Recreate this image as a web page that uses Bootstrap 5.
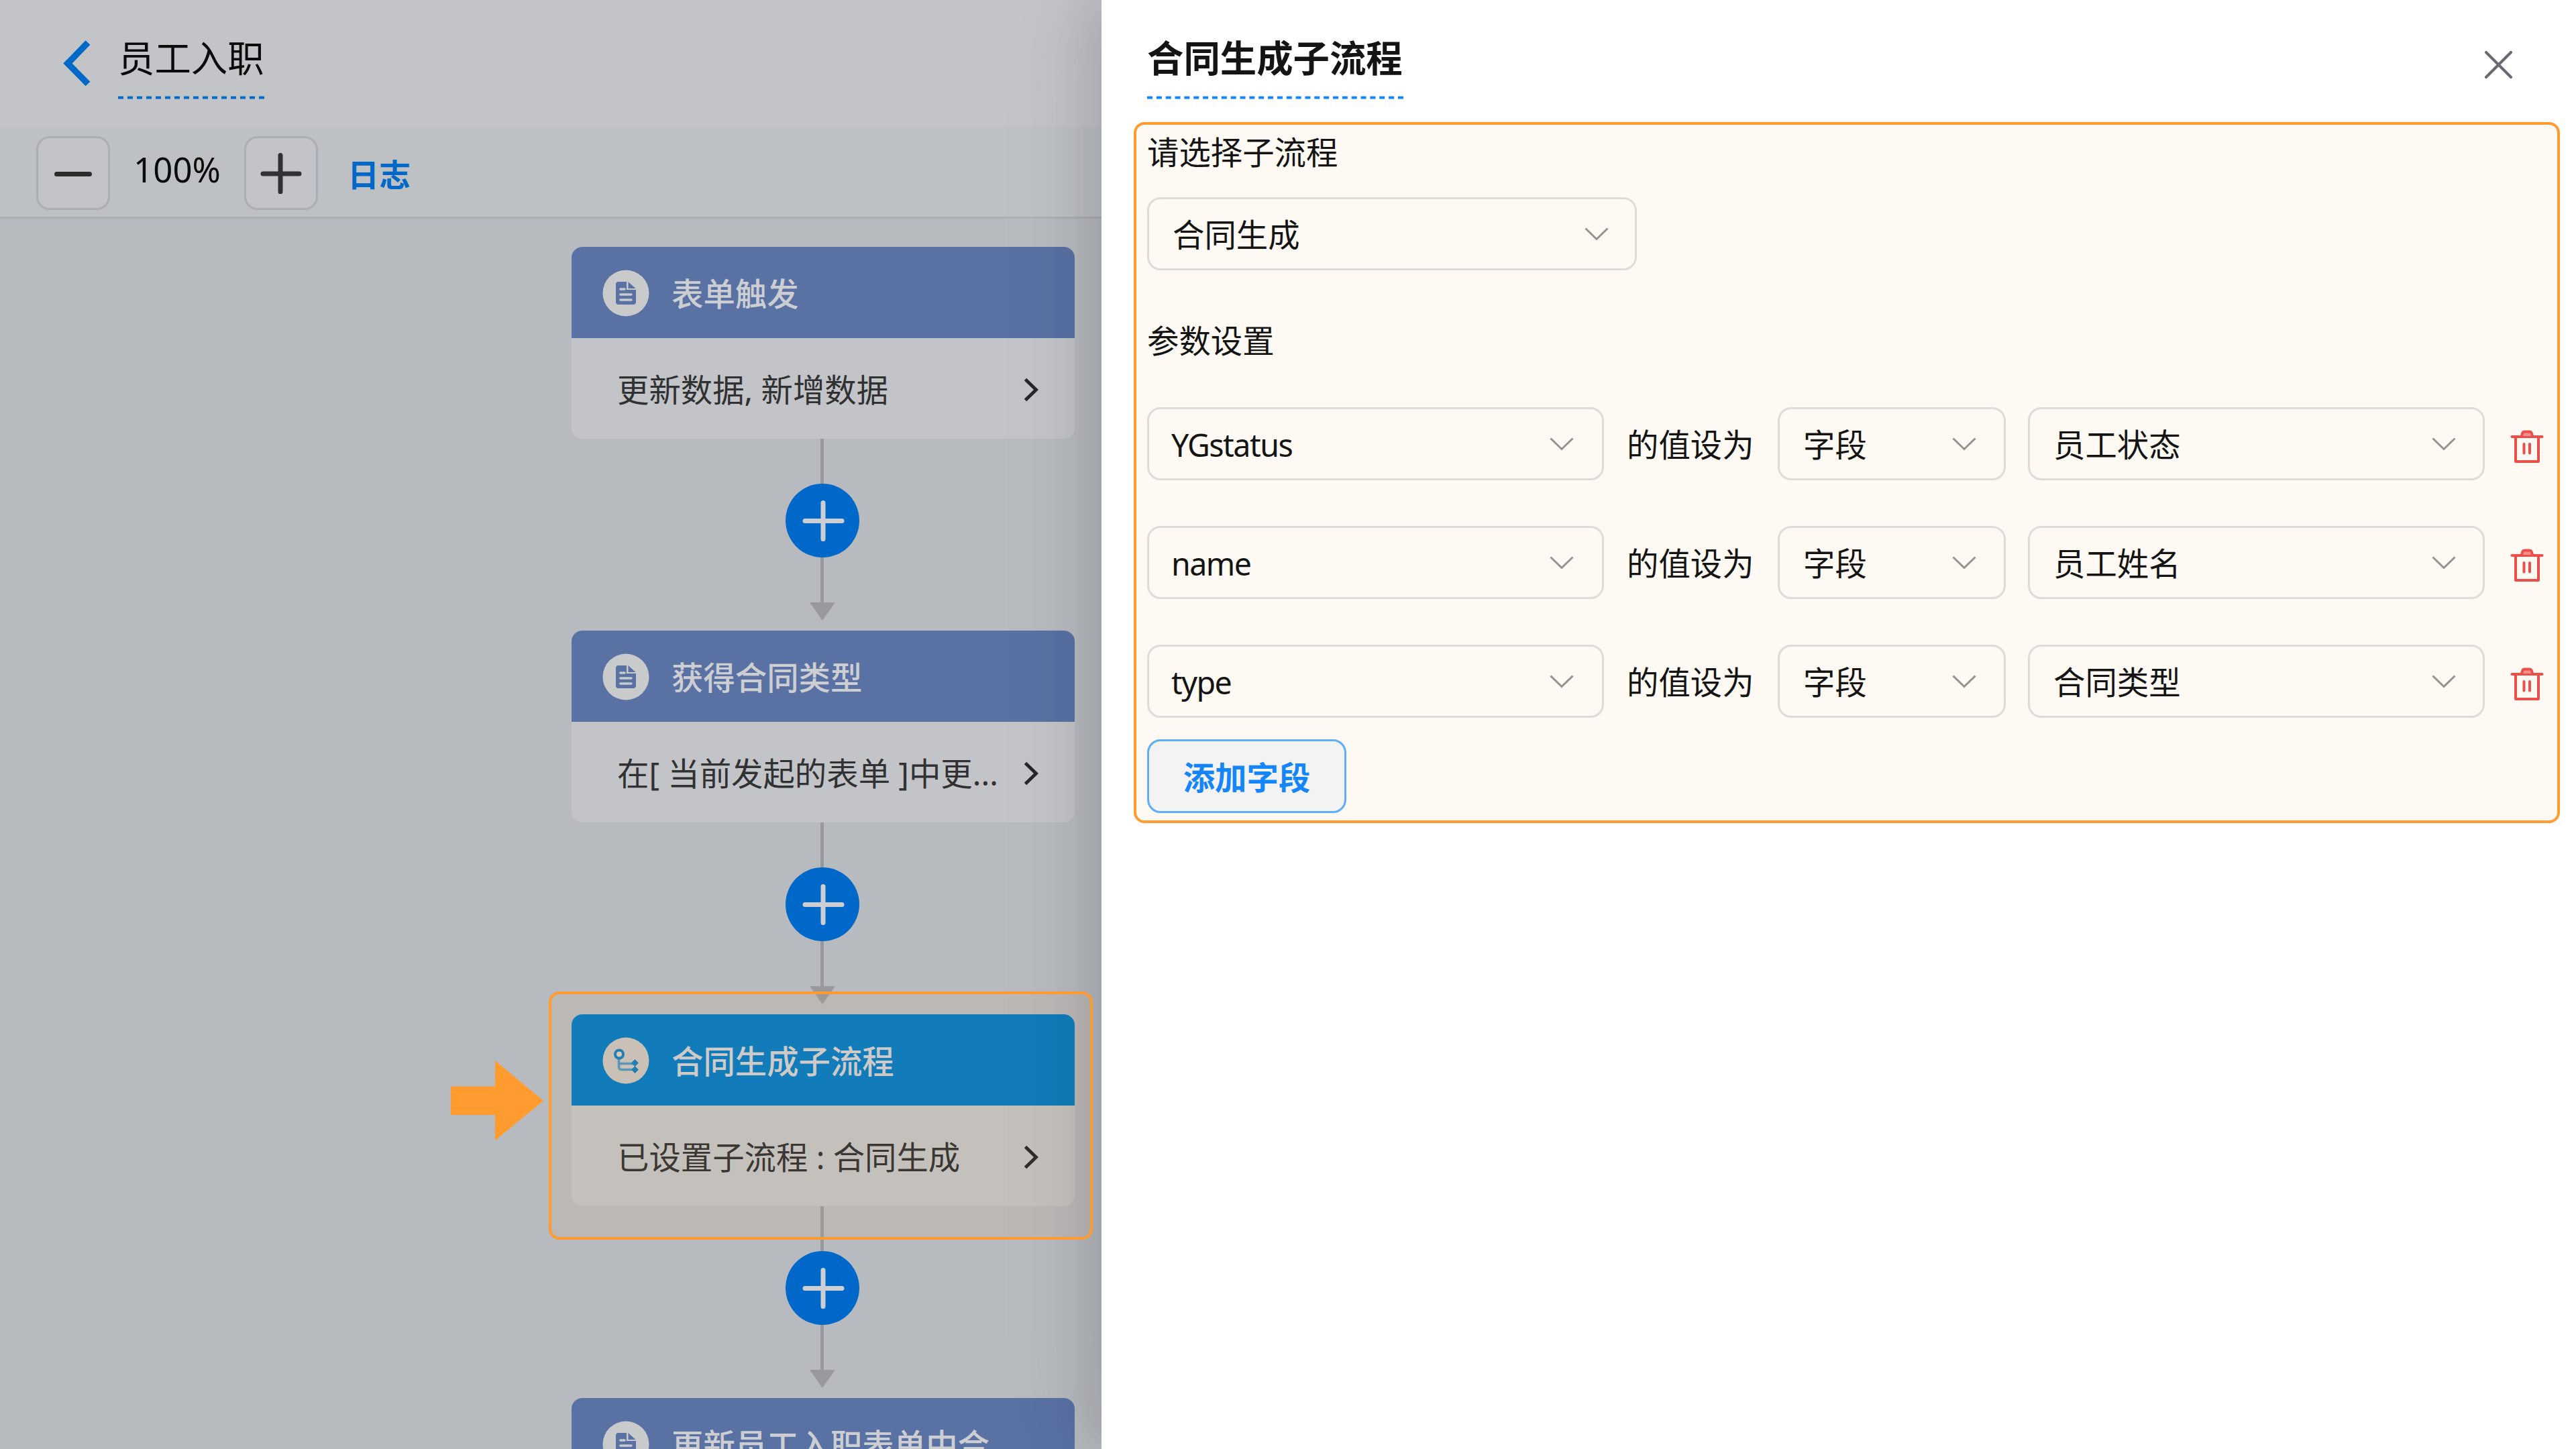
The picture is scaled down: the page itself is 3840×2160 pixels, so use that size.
<!DOCTYPE html>
<html lang="zh-CN">
<head>
<meta charset="utf-8">
<title>员工入职</title>
<link href="https://cdn.jsdelivr.net/npm/bootstrap@5.3.0/dist/css/bootstrap.min.css" rel="stylesheet">
<style>
  body { width: 3840px; height: 2160px; overflow: hidden; background: #b7babf; color: #141414;
    font-family: "Noto Sans", "Noto Sans CJK SC", sans-serif; font-size: 47.4px; line-height: 1; }
  svg { display: block; flex: none; }
  .cjk { font-family: "Noto Sans CJK SC", sans-serif; }
  .workspace { width: 1642px; height: 2160px; }
  .topbar { height: 190px; background: #c3c4c8; padding: 0 0 0 94px; }
  .back-icon { margin: 60px 41px 0 0; }
  .flow-title, .drawer-title { height: 105px; margin-top: 43px; line-height: 82px; font-size: 54.4px; }
  .flow-title { color: #0b0b0c; }
  .drawer-title { font-weight: 700; color: #141414; }
  .title-rule { margin-top: 18px; }
  .toolbar { height: 136px; background: #bdc1c4; border-bottom: 3px solid #adb1b4; padding: 13px 0 0 54px; }
  .zoom-btn { width: 110px; height: 110px; background: #c3c4c8; border: 3px solid #abaeb6; border-radius: 20px; }
  .zoom-value { width: 200px; height: 110px; line-height: 99px; font-size: 51px; color: #0b0b0c; }
  .log-link { margin-left: 44px; height: 110px; line-height: 109px; color: #0068c8; font-weight: 700; font-size: 47px; }
  .flow { padding: 42px 0 0 852px; }
  .node { width: 750px; height: 286px; border-radius: 16px; background: #c3c4c8; }
  .node-head { height: 136px; background: #5a71a4; color: #cdced2; padding: 2px 0 0 46px; font-weight: 500; }
  .node-head svg { margin-right: 33px; }
  .node-head span { margin-top: -3px; }
  .node-active .node-head { background: #047bc3; }
  .node-active { background: #c1c4c6; }
  .node-body { height: 150px; padding: 4px 54px 0 68px; color: #303133; }
  .connector { width: 747px; height: 286px; }
  .line { width: 5px; height: 67px; background: #98999d; }
  .drawer { width: 2198px; background: #fff; padding: 0 24px 0 48px;
    box-shadow: -20px 0 54px rgba(0,0,0,.08), -31px 0 95px rgba(0,0,0,.05), -41px 0 163px rgba(0,0,0,.03); }
  .drawer-head { height: 182px; padding: 0 70px 0 20px; }
  .drawer-head svg.close-icon { margin-top: 75px; }
  .params { height: 1045px; background: #fef9f2; border: 4px solid #ff9b2f; border-radius: 16px; padding: 16px 20px 0 16px; }
  .lbl { height: 48px; line-height: 46px; }
  .picker { height: 109px; border: 3px solid #dedcdb; border-radius: 20px; padding: 0 40px 0 35px; }
  .picker span { padding-bottom: 2px; }
  .picker .latin { padding: 3px 0 0; font-size: 46.5px; letter-spacing: -1.5px; margin-left: -2px; }
  .w-flow { width: 730px; } .w-key { width: 681px; } .w-kind { width: 340px; } .w-val { width: 681px; }
  .w-key { padding-right: 42px; } .w-kind { padding-right: 41px; }
  .w-flow svg { margin-right: -1px; }
  .param-row { height: 109px; margin-bottom: 68px; }
  .row-text { width: 259px; padding: 0 0 2px 34px; }
  .trash-icon { margin: 8px 0 0 38px; }
  .add-btn { width: 297px; height: 110px; margin-top: -36px; border: 3px solid #5eaefa; border-radius: 20px;
    background: #f3f3f3; color: #1486fa; font-weight: 700; padding-bottom: 1px; }
  .focus-frame { left: 818px; top: 1478px; width: 811px; height: 370px; border: 4px solid #ff9b2f; border-radius: 16px;
    background: rgba(255,155,47,.06); z-index: 3; }
  .pointer { left: 672px; top: 1581px; z-index: 3; }
</style>
</head>
<body class="d-flex position-relative">
<svg width="0" height="0" class="position-absolute">
  <symbol id="down" viewBox="0 0 36 20"><path d="M1.5 1.5 18 17.5 34.500 1.500" fill="none" stroke="#96928e" stroke-width="3"/></symbol>
  <symbol id="right" viewBox="0 0 22 36"><path d="M2.500 2.500 18.500 18 2.500 33.500" fill="none" stroke="#26272a" stroke-width="5"/></symbol>
  <symbol id="doc" viewBox="0 0 70 70"><circle cx="35" cy="35" r="34.500" fill="#c9cacc"/>
    <path d="M23 18H36V30H50V48Q50 52 46 52H24Q20 52 20 48V22Q20 18 24 18ZM38.500 18 49.500 28H38.500Z" fill="#5a71a4"/>
    <path d="M27 29h6M27 37h16M27 45h16" stroke="#c9cacc" stroke-width="3.600" stroke-linecap="round"/></symbol>
  <symbol id="branch" viewBox="0 0 70 70"><circle cx="35" cy="35" r="34.500" fill="#c8c3be"/>
    <path d="M24.500 30V44Q24.500 48.500 29 48.500H48M24.500 39.500H48" fill="none" stroke="#4d97c0" stroke-width="3.600"/>
    <circle cx="25" cy="25.500" r="6" fill="#d6cbc0" stroke="#137dba" stroke-width="4"/>
    <path d="m48.500 33.500 5 5-5 5-5-5zM48.500 43.500l5 5-5 5-5-5z" fill="#137dba" stroke="#137dba" stroke-linejoin="round"/></symbol>
  <symbol id="add" viewBox="0 0 110 110"><circle cx="55" cy="55" r="55" fill="#0068c8"/>
    <path d="M29 55.500H84M56 28.500V82.500" stroke="#cdced2" stroke-width="7" stroke-linecap="round"/></symbol>
  <symbol id="tip" viewBox="0 0 38 27"><path d="M0 0H38L19 27Z" fill="#98999d"/></symbol>
  <symbol id="trash" viewBox="0 0 50 50"><g fill="none" stroke="#ec4f4a" stroke-width="4" stroke-linecap="round" stroke-linejoin="round">
    <path d="M2.500 10H47.500"/><path d="M17 9Q18 2.500 21 2.500H29Q32 2.500 33 9" fill="#f0908a"/>
    <path d="M8 11V46.500Q8 47 8.500 47H41.500Q42 47 42 46.500V11"/><path d="M20.500 21V34.500M29 21V34.500"/></g></symbol>
</svg>

<main class="workspace flex-shrink-0 overflow-hidden">
  <header class="topbar d-flex align-items-start">
    <svg class="back-icon" width="41" height="69" viewBox="0 0 41 69"><path d="M37 3.500 7 34.500 37 65" fill="none" stroke="#0068c8" stroke-width="9.500"/></svg>
    <div class="flow-title cjk">员工入职<svg class="title-rule" width="218" height="5"><path d="M0 2.500H218" stroke="#0068c8" stroke-width="4" stroke-dasharray="8 6"/></svg></div>
  </header>
  <div class="toolbar d-flex">
    <div class="zoom-btn d-flex align-items-center justify-content-center"><svg width="56" height="12" viewBox="0 0 56 12"><path d="M3.500 7.500H52.500" stroke="#2a2b2d" stroke-width="7" stroke-linecap="round"/></svg></div>
    <div class="zoom-value text-center">100%</div>
    <div class="zoom-btn d-flex align-items-center justify-content-center"><svg width="62" height="62" viewBox="0 0 62 62"><path d="M4 32H58M30 4.500V59" stroke="#303134" stroke-width="7" stroke-linecap="round"/></svg></div>
    <div class="log-link cjk">日志</div>
  </div>
  <div class="flow">
    <div class="node overflow-hidden">
      <div class="node-head d-flex align-items-center"><svg width="70" height="70"><use href="#doc"/></svg><span class="cjk">表单触发</span></div>
      <div class="node-body d-flex align-items-center justify-content-between"><span>更新数据, 新增数据</span><svg width="22" height="36"><use href="#right"/></svg></div>
    </div>
    <div class="connector d-flex flex-column align-items-center"><div class="line"></div><svg width="110" height="110"><use href="#add"/></svg><div class="line"></div><svg width="38" height="27"><use href="#tip"/></svg></div>
    <div class="node overflow-hidden">
      <div class="node-head d-flex align-items-center"><svg width="70" height="70"><use href="#doc"/></svg><span class="cjk">获得合同类型</span></div>
      <div class="node-body d-flex align-items-center justify-content-between"><span class="text-nowrap">在[ 当前发起的表单 ]中更...</span><svg width="22" height="36"><use href="#right"/></svg></div>
    </div>
    <div class="connector d-flex flex-column align-items-center"><div class="line"></div><svg width="110" height="110"><use href="#add"/></svg><div class="line"></div><svg width="38" height="27"><use href="#tip"/></svg></div>
    <div class="node node-active overflow-hidden">
      <div class="node-head d-flex align-items-center"><svg width="70" height="70"><use href="#branch"/></svg><span class="cjk">合同生成子流程</span></div>
      <div class="node-body d-flex align-items-center justify-content-between"><span>已设置子流程 : 合同生成</span><svg width="22" height="36"><use href="#right"/></svg></div>
    </div>
    <div class="connector d-flex flex-column align-items-center"><div class="line"></div><svg width="110" height="110"><use href="#add"/></svg><div class="line"></div><svg width="38" height="27"><use href="#tip"/></svg></div>
    <div class="node overflow-hidden">
      <div class="node-head d-flex align-items-center"><svg width="70" height="70"><use href="#doc"/></svg><span class="cjk">更新员工入职表单中合</span></div>
    </div>
  </div>
</main>

<aside class="drawer flex-shrink-0 position-relative">
  <div class="drawer-head d-flex justify-content-between align-items-start">
    <div class="drawer-title cjk">合同生成子流程<svg class="title-rule" width="382" height="5"><path d="M0 2.500H382" stroke="#1486fa" stroke-width="4" stroke-dasharray="8 5.850"/></svg></div>
    <svg class="close-icon" width="43" height="43" viewBox="0 0 43 43"><path d="M3 3 40 40M40 3 3 40" stroke="#686b71" stroke-width="4.200" stroke-linecap="round"/></svg>
  </div>
  <section class="params">
    <div class="lbl cjk">请选择子流程</div>
    <div class="picker w-flow d-flex align-items-center justify-content-between" style="margin-top:44px"><span class="cjk">合同生成</span><svg width="36" height="20"><use href="#down"/></svg></div>
    <div class="lbl cjk" style="margin:80px 0 76px">参数设置</div>
    <div class="param-row d-flex">
      <div class="picker w-key d-flex align-items-center justify-content-between"><span class="latin">YGstatus</span><svg width="36" height="20"><use href="#down"/></svg></div>
      <div class="row-text cjk d-flex align-items-center">的值设为</div>
      <div class="picker w-kind d-flex align-items-center justify-content-between"><span class="cjk">字段</span><svg width="36" height="20"><use href="#down"/></svg></div>
      <div class="picker w-val ms-auto d-flex align-items-center justify-content-between"><span class="cjk">员工状态</span><svg width="36" height="20"><use href="#down"/></svg></div>
      <svg class="trash-icon align-self-center" width="50" height="50"><use href="#trash"/></svg>
    </div>
    <div class="param-row d-flex">
      <div class="picker w-key d-flex align-items-center justify-content-between"><span class="latin">name</span><svg width="36" height="20"><use href="#down"/></svg></div>
      <div class="row-text cjk d-flex align-items-center">的值设为</div>
      <div class="picker w-kind d-flex align-items-center justify-content-between"><span class="cjk">字段</span><svg width="36" height="20"><use href="#down"/></svg></div>
      <div class="picker w-val ms-auto d-flex align-items-center justify-content-between"><span class="cjk">员工姓名</span><svg width="36" height="20"><use href="#down"/></svg></div>
      <svg class="trash-icon align-self-center" width="50" height="50"><use href="#trash"/></svg>
    </div>
    <div class="param-row d-flex">
      <div class="picker w-key d-flex align-items-center justify-content-between"><span class="latin">type</span><svg width="36" height="20"><use href="#down"/></svg></div>
      <div class="row-text cjk d-flex align-items-center">的值设为</div>
      <div class="picker w-kind d-flex align-items-center justify-content-between"><span class="cjk">字段</span><svg width="36" height="20"><use href="#down"/></svg></div>
      <div class="picker w-val ms-auto d-flex align-items-center justify-content-between"><span class="cjk">合同类型</span><svg width="36" height="20"><use href="#down"/></svg></div>
      <svg class="trash-icon align-self-center" width="50" height="50"><use href="#trash"/></svg>
    </div>
    <div class="add-btn cjk d-flex align-items-center justify-content-center">添加字段</div>
  </section>
</aside>

<div class="focus-frame position-absolute"></div>
<svg class="pointer position-absolute" width="138" height="119" viewBox="0 0 138 119"><path d="M0 38.500H66V0L138 60 66 119V81H0Z" fill="#ff9b2f"/></svg>
<script src="https://cdn.jsdelivr.net/npm/bootstrap@5.3.0/dist/js/bootstrap.bundle.min.js"></script>
</body>
</html>
